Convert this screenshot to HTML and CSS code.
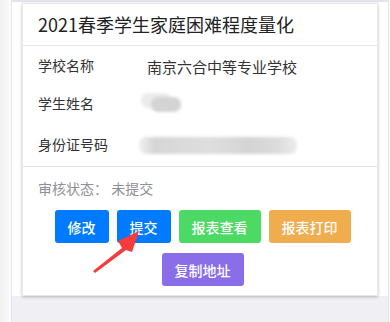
FILE: index.html
```html
<!DOCTYPE html>
<html lang="zh-CN">
<head>
    <meta charset="UTF-8">
    <meta name="viewport" content="width=device-width, initial-scale=1.0">
    <title>家庭困难程度量化</title>
    <link rel="stylesheet" href="styles.css">
</head>
<body>

    <!-- linker Randstreifen -->
    <div class="side"></div>

    <div class="page">
        <div class="wrap">
            <div class="card">
                <div class="card-header">2021春季学生家庭困难程度量化</div>

                <div class="card-body">
                    <div class="row">
                        <span class="label">学校名称</span>
                        <span class="value">南京六合中等专业学校</span>
                    </div>
                    <div class="row">
                        <span class="label">学生姓名</span>
                        <span class="blur blur-name"></span>
                    </div>
                    <div class="row">
                        <span class="label">身份证号码</span>
                        <span class="blur blur-id"></span>
                    </div>
                </div>

                <div class="card-footer">
                    <div class="status">审核状态： 未提交</div>
                    <div class="buttons">
                        <button class="btn btn-blue">修改</button>
                        <button class="btn btn-blue">提交</button>
                        <button class="btn btn-green">报表查看</button>
                        <button class="btn btn-orange">报表打印</button>
                    </div>
                    <div class="buttons">
                        <button class="btn btn-purple">复制地址</button>
                    </div>
                </div>

                <!-- roter Pfeil -->
                <svg class="arrow" width="60" height="50" viewBox="0 0 60 50">
                    <polygon points="0,43 29,20 25,13 46,3 39,24 33,22 2,45" fill="#f53b3b"/>
                </svg>
            </div>
        </div>
    </div>

</body>
</html>
```

FILE: styles.css
```css
body {
    margin: 0;
    padding: 0;
    display: flex;
    height: 322px;
    overflow: hidden;
    font-family: 'Noto Sans CJK SC', 'Noto Sans', sans-serif;
    background-color: #ffffff;
}
.side {
    width: 11px;
    background: linear-gradient(to right, #f1f1f1, #fbfbfb);
    border-right: 1px solid #e6e6e6;
}
.page {
    width: 376px;
    background-color: #efeff4;
    border-right: 1px solid #e6e6e6;
}
.wrap {
    background-color: #ffffff;
    border-top: 2px solid #e4e4ea;
    padding: 1px 10px 0 10px;
}
.card {
    position: relative;
    background-color: #ffffff;
    border: 1px solid #e8e8e8;
    box-shadow: 0 1px 3px rgba(0, 0, 0, 0.25);
    margin-bottom: -1px;
}
.card-header {
    height: 41px;
    line-height: 40px;
    padding: 0 15px;
    font-size: 18px;
    color: #222;
    border-bottom: 1px solid #e5e5e5;
}
.card-body {
    border-bottom: 1px solid #e5e5e5;
}
.row {
    display: flex;
    align-items: center;
    height: 38px;
    padding: 0 15px;
    font-size: 14px;
    color: #333;
}
.row:last-child {
    height: 44px;
}
.label {
    width: 109px;
}
.value {
    font-size: 15px;
    padding-top: 3px;
}
.blur {
    display: block;
    background-color: #d4d4d4;
    filter: blur(1.5px);
    border-radius: 7px;
}
.blur-name {
    width: 30px;
    height: 15px;
    margin-left: 4px;
    margin-top: 3px;
    box-shadow: -10px -4px 0 #ebebeb;
}
.blur-id {
    width: 158px;
    height: 17px;
    margin-left: -8px;
    margin-top: 2px;
    background: linear-gradient(to right, #f0f0f0, #d6d6d6 10%, #dedede 45%, #d4d4d4 70%, #dcdcdc 88%, #ececec);
}
.card-footer {
    padding: 10px 10px 9px 15px;
}
.status {
    font-size: 14px;
    line-height: 22px;
    color: #8f8f94;
    margin-bottom: 11px;
}
.buttons {
    display: flex;
    justify-content: center;
    gap: 8px;
    margin-bottom: 10px;
}
.buttons:last-child {
    margin-bottom: 0;
}
.btn {
    height: 33px;
    padding: 0 13px;
    border: none;
    border-radius: 3px;
    color: #ffffff;
    font-family: 'Noto Sans CJK SC', sans-serif;
    font-size: 14px;
    font-weight: 500;
}
.btn-blue {
    background-color: #007aff;
}
.btn-green {
    background-color: #4cd964;
}
.btn-orange {
    background-color: #f0ad4e;
}
.btn-purple {
    background-color: #8a6de9;
}
.arrow {
    position: absolute;
    left: 70px;
    top: 224px;
}
```
